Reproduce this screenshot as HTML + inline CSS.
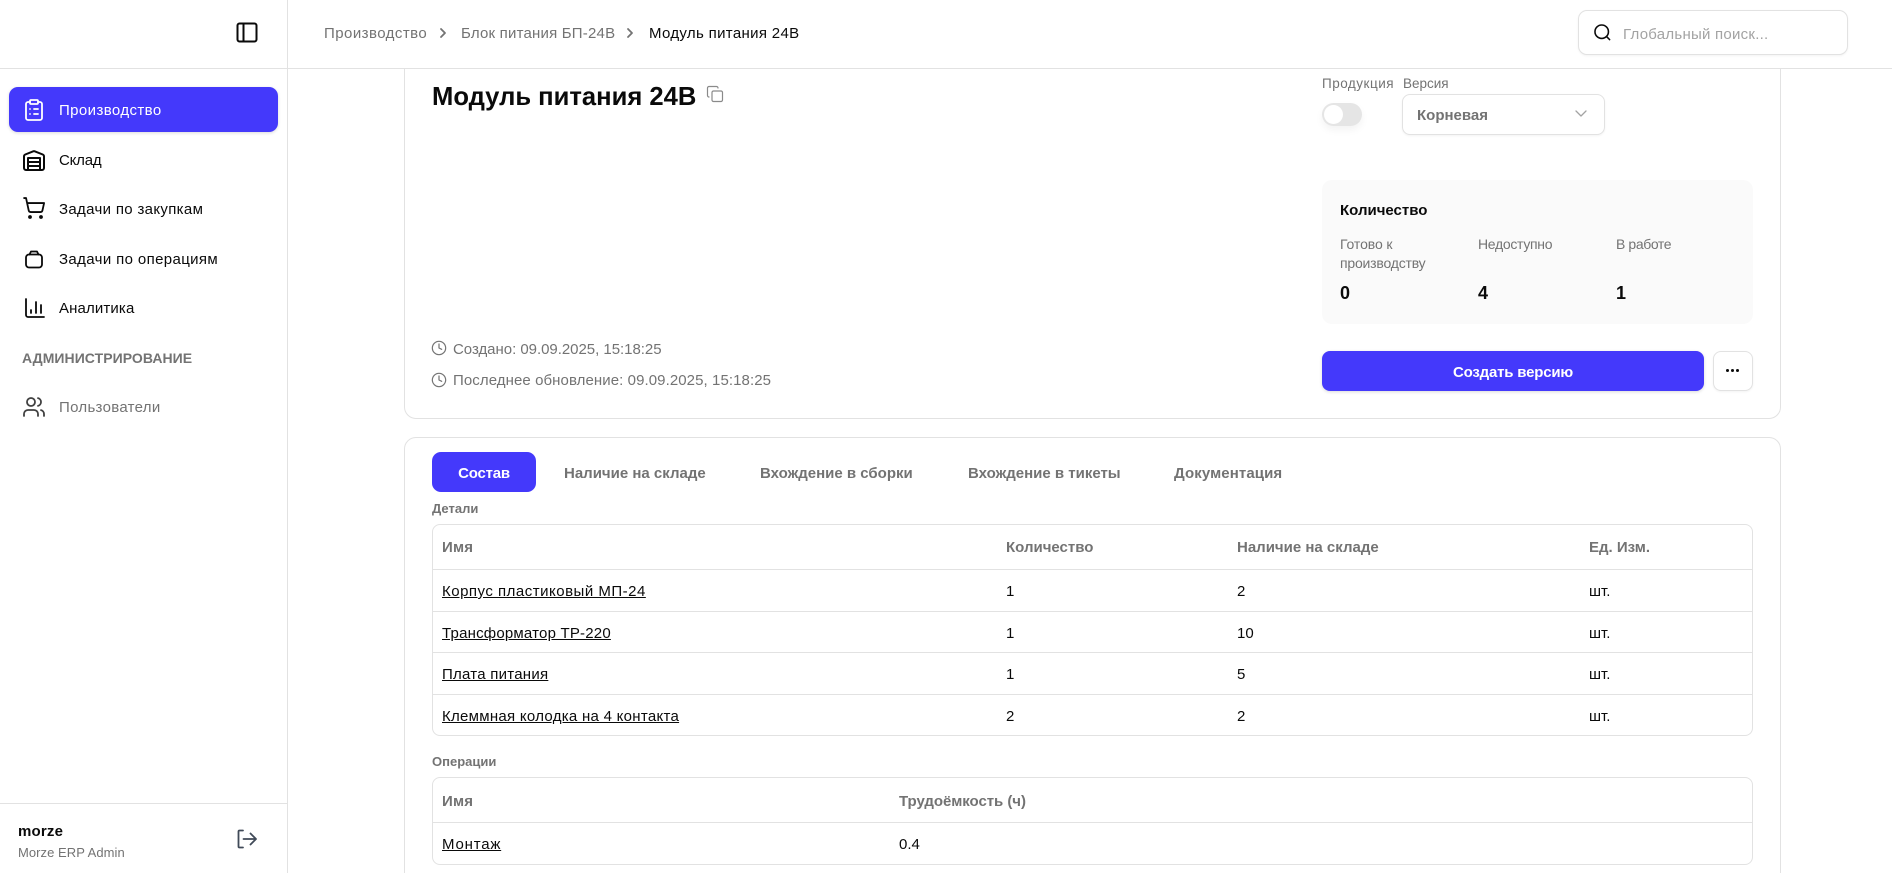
<!DOCTYPE html>
<html lang="ru"><head><meta charset="utf-8"><title>Модуль питания 24В</title>
<style>
html,body{margin:0;padding:0;width:1892px;height:873px;overflow:hidden;background:#fff}
body{position:relative;font-family:"Liberation Sans","Noto Sans CJK SC",sans-serif;font-size:15px;color:#0a0a0a}
.a{position:absolute}
.t{position:absolute;white-space:nowrap;line-height:20px;transform:translateY(-9px)}
.g{color:#737373}
.b{border:1px solid #e2e2e2;box-sizing:border-box;background:#fff}
.s{font-weight:700}
.l{background:#e2e2e2;height:1px}
a{color:#0a0a0a;text-decoration:underline}
svg{position:absolute;fill:none;stroke:currentColor;stroke-width:1.8;stroke-linecap:round;stroke-linejoin:round}
</style></head><body>

<!-- main cards -->
<div class="a b" style="left:404px;top:40px;width:1377px;height:379px;border-radius:12px"></div>
<div class="a b" style="left:404px;top:437px;width:1377px;height:500px;border-radius:12px"></div>

<!-- header -->
<div class="a" style="left:0;top:0;width:1892px;height:69px;background:#fff;border-bottom:1px solid #e2e2e2;box-sizing:border-box"></div>
<!-- sidebar -->
<div class="a" style="left:0;top:0;width:288px;height:873px;border-right:1px solid #e2e2e2;box-sizing:border-box"></div>
<div class="a" style="left:0;top:68px;width:288px;height:1px;background:#e2e2e2"></div>
<div class="a" style="left:0;top:803px;width:288px;height:1px;background:#e2e2e2"></div>

<svg style="left:235px;top:20px;color:#0a0a0a;stroke-width:2" width="24" height="24" viewBox="0 0 24 24"><rect x="2.5" y="3.5" width="19" height="18" rx="2"/><path d="M8.5 3.5v18"/></svg>

<div class="a" style="left:9px;top:87px;width:269px;height:45px;background:#4439fb;border-radius:9px;box-shadow:0 1px 3px rgba(0,0,0,.15)"></div>
<svg style="left:22px;top:98px;color:#fff" width="24" height="24" viewBox="0 0 24 24"><rect x="8" y="2" width="8" height="4" rx="1"/><path d="M16 4h2a2 2 0 0 1 2 2v14a2 2 0 0 1-2 2H6a2 2 0 0 1-2-2V6a2 2 0 0 1 2-2h2"/><path d="M12 11h4M12 16h4M8 11h.01M8 16h.01"/></svg>
<div class="t" style="left:59px;top:110px;color:#fff;letter-spacing:.4px">Производство</div>

<svg style="left:22px;top:148px;stroke-width:2" width="24" height="24" viewBox="0 0 24 24"><path d="M22 8.35V20a2 2 0 0 1-2 2H4a2 2 0 0 1-2-2V8.35A2 2 0 0 1 3.26 6.5l8-3.2a2 2 0 0 1 1.48 0l8 3.2A2 2 0 0 1 22 8.35Z"/><path d="M6 18h12M6 14h12"/><rect x="6" y="10" width="12" height="12"/></svg>
<div class="t" style="left:59px;top:160px;letter-spacing:-.2px">Склад</div>

<svg style="left:22px;top:196px" width="24" height="24" viewBox="0 0 24 24"><circle cx="8" cy="21" r="1"/><circle cx="19" cy="21" r="1"/><path d="M2.05 2.05h2l2.66 12.42a2 2 0 0 0 2 1.58h9.78a2 2 0 0 0 1.95-1.57l1.65-7.43H5.12"/></svg>
<div class="t" style="left:59px;top:209px;letter-spacing:.33px">Задачи по закупкам</div>

<svg style="left:22px;top:247px" width="24" height="24" viewBox="0 0 24 24"><rect x="4" y="7.5" width="16" height="13" rx="3"/><path d="M7.5 7.5 9 4.5h6l1.5 3"/></svg>
<div class="t" style="left:59px;top:259px;letter-spacing:.37px">Задачи по операциям</div>

<svg style="left:22px;top:296px" width="24" height="24" viewBox="0 0 24 24"><path d="M4 3v16a2 2 0 0 0 2 2h16"/><path d="M9 17v-3M14 17V6M19 17V9"/></svg>
<div class="t" style="left:59px;top:308px;letter-spacing:.13px">Аналитика</div>

<div class="t s g" style="left:22px;top:357px;font-size:14px;letter-spacing:.05px">АДМИНИСТРИРОВАНИЕ</div>

<svg style="left:22px;top:395px;color:#404040" width="24" height="24" viewBox="0 0 24 24"><path d="M16 21v-2a4 4 0 0 0-4-4H6a4 4 0 0 0-4 4v2"/><circle cx="9" cy="7" r="4"/><path d="M22 21v-2a4 4 0 0 0-3-3.87M16 3.13a4 4 0 0 1 0 7.75"/></svg>
<div class="t g" style="left:59px;top:407px;letter-spacing:.3px">Пользователи</div>

<div class="t s" style="left:18px;top:831px;letter-spacing:.2px">morze</div>
<div class="t g" style="left:18px;top:852px;font-size:13px;letter-spacing:.05px">Morze ERP Admin</div>
<svg style="left:235px;top:827px;color:#404a58" width="24" height="24" viewBox="0 0 24 24"><path d="M8 3.5H4.5a1 1 0 0 0-1 1v15a1 1 0 0 0 1 1H8"/><path d="m15.5 6.5 5.5 5.5-5.5 5.5M21 12H8.5"/></svg>

<!-- breadcrumbs -->
<div class="t g" style="left:324px;top:33px;letter-spacing:.45px">Производство</div>
<svg style="left:436px;top:26px;color:#737373" width="14" height="14" viewBox="0 0 14 14"><path d="m5 3 4 4-4 4"/></svg>
<div class="t g" style="left:461px;top:33px;letter-spacing:.2px">Блок питания БП-24В</div>
<svg style="left:623px;top:26px;color:#737373" width="14" height="14" viewBox="0 0 14 14"><path d="m5 3 4 4-4 4"/></svg>
<div class="t" style="left:649px;top:33px;letter-spacing:.33px">Модуль питания 24В</div>

<!-- search -->
<div class="a b" style="left:1578px;top:10px;width:270px;height:45px;border-radius:9px;box-shadow:0 1px 2px rgba(0,0,0,.05)"></div>
<svg style="left:1593px;top:23px;color:#0a0a0a;stroke-width:2" width="19" height="19" viewBox="0 0 24 24"><circle cx="11" cy="11" r="8.5"/><path d="m21 21-4-4"/></svg>
<div class="t" style="left:1623px;top:34px;color:#a3a3a3;letter-spacing:.25px">Глобальный поиск...</div>

<!-- title -->
<div class="t s" style="left:432px;top:97px;font-size:25.6px;line-height:32px;transform:translateY(-16px)">Модуль питания 24В</div>
<svg style="left:706px;top:85px;color:#8a8a8a;stroke-width:1.6" width="18" height="18" viewBox="0 0 24 24"><rect x="8" y="8" width="14" height="14" rx="2"/><path d="M4 16c-1.1 0-2-.9-2-2V4c0-1.1.9-2 2-2h10c1.1 0 2 .9 2 2"/></svg>

<div class="t g" style="left:1322px;top:83px;font-size:13.5px;letter-spacing:.5px">Продукция</div>
<div class="t g" style="left:1403px;top:83px;font-size:13.5px">Версия</div>
<div class="a" style="left:1322px;top:103px;width:40px;height:23px;border-radius:12px;background:#e5e5e5;box-shadow:0 4px 8px rgba(0,0,0,.05)"></div>
<div class="a" style="left:1324px;top:105px;width:19px;height:19px;border-radius:50%;background:#fff"></div>
<div class="a b" style="left:1402px;top:94px;width:203px;height:41px;border-radius:8px;box-shadow:0 1px 2px rgba(0,0,0,.05)"></div>
<div class="t s g" style="left:1417px;top:115px;">Корневая</div>
<svg style="left:1574px;top:107px;color:#a3a3a3;stroke-width:1.3" width="14" height="14" viewBox="0 0 14 14"><path d="m2 4 5 5 5-5"/></svg>

<div class="a" style="left:1322px;top:180px;width:431px;height:144px;border-radius:10px;background:#fafafa"></div>
<div class="t s" style="left:1340px;top:210px">Количество</div>
<div class="t g" style="left:1340px;top:243px;font-size:14px;letter-spacing:-.1px">Готово к</div>
<div class="t g" style="left:1340px;top:262px;font-size:14px;letter-spacing:-.2px">производству</div>
<div class="t g" style="left:1478px;top:243px;font-size:14px;letter-spacing:-.3px">Недоступно</div>
<div class="t g" style="left:1616px;top:243px;font-size:14px;letter-spacing:-.4px">В работе</div>
<div class="t s" style="left:1340px;top:292px;font-size:18px">0</div>
<div class="t s" style="left:1478px;top:292px;font-size:18px">4</div>
<div class="t s" style="left:1616px;top:292px;font-size:18px">1</div>

<div class="a" style="left:1322px;top:351px;width:382px;height:40px;background:#4439fb;border-radius:8px;box-shadow:0 1px 3px rgba(0,0,0,.15)"></div>
<div class="t s" style="left:1322px;width:382px;text-align:center;top:372px;color:#fff;letter-spacing:-.2px">Создать версию</div>
<div class="a b" style="left:1713px;top:351px;width:40px;height:40px;border-radius:8px;box-shadow:0 1px 2px rgba(0,0,0,.05)"></div>
<div class="a" style="left:1726px;top:369px;width:3px;height:3px;border-radius:50%;background:#0a0a0a;box-shadow:5px 0 #0a0a0a,10px 0 #0a0a0a"></div>

<svg style="left:431px;top:340px;color:#737373;stroke-width:1.8" width="16" height="16" viewBox="0 0 24 24"><circle cx="12" cy="12" r="10"/><path d="M12 6v6l4 2"/></svg>
<div class="t g" style="left:453px;top:349px;letter-spacing:-.03px">Создано: 09.09.2025, 15:18:25</div>
<svg style="left:431px;top:372px;color:#737373;stroke-width:1.8" width="16" height="16" viewBox="0 0 24 24"><circle cx="12" cy="12" r="10"/><path d="M12 6v6l4 2"/></svg>
<div class="t g" style="left:453px;top:380px;letter-spacing:.08px">Последнее обновление: 09.09.2025, 15:18:25</div>

<!-- tabs -->
<div class="a" style="left:432px;top:452px;width:104px;height:40px;background:#4439fb;border-radius:9px"></div>
<div class="t s" style="left:432px;width:104px;text-align:center;top:473px;color:#fff;letter-spacing:-.2px">Состав</div>
<div class="t s g" style="left:564px;top:473px">Наличие на складе</div>
<div class="t s g" style="left:760px;top:473px">Вхождение в сборки</div>
<div class="t s g" style="left:968px;top:473px">Вхождение в тикеты</div>
<div class="t s g" style="left:1174px;top:473px;letter-spacing:.1px">Документация</div>

<div class="t s g" style="left:432px;top:508px;font-size:13px">Детали</div>

<!-- table 1 -->
<div class="a b" style="left:432px;top:524px;width:1321px;height:212px;border-radius:8px"></div>
<div class="a l" style="left:433px;top:569px;width:1319px"></div>
<div class="a l" style="left:433px;top:611px;width:1319px"></div>
<div class="a l" style="left:433px;top:652px;width:1319px"></div>
<div class="a l" style="left:433px;top:694px;width:1319px"></div>

<div class="t s g" style="left:442px;top:547px;letter-spacing:.2px">Имя</div>
<div class="t s g" style="left:1006px;top:547px">Количество</div>
<div class="t s g" style="left:1237px;top:547px">Наличие на складе</div>
<div class="t s g" style="left:1589px;top:547px">Ед. Изм.</div>

<div class="t" style="left:442px;top:591px;letter-spacing:.5px"><a>Корпус пластиковый МП-24</a></div>
<div class="t" style="left:1006px;top:591px">1</div><div class="t" style="left:1237px;top:591px">2</div><div class="t" style="left:1589px;top:591px">шт.</div>
<div class="t" style="left:442px;top:633px;letter-spacing:.2px"><a>Трансформатор ТР-220</a></div>
<div class="t" style="left:1006px;top:633px">1</div><div class="t" style="left:1237px;top:633px">10</div><div class="t" style="left:1589px;top:633px">шт.</div>
<div class="t" style="left:442px;top:674px;letter-spacing:.25px"><a>Плата питания</a></div>
<div class="t" style="left:1006px;top:674px">1</div><div class="t" style="left:1237px;top:674px">5</div><div class="t" style="left:1589px;top:674px">шт.</div>
<div class="t" style="left:442px;top:716px;letter-spacing:.28px"><a>Клеммная колодка на 4 контакта</a></div>
<div class="t" style="left:1006px;top:716px">2</div><div class="t" style="left:1237px;top:716px">2</div><div class="t" style="left:1589px;top:716px">шт.</div>

<div class="t s g" style="left:432px;top:761px;font-size:13px">Операции</div>

<!-- table 2 -->
<div class="a b" style="left:432px;top:777px;width:1321px;height:88px;border-radius:8px"></div>
<div class="a l" style="left:433px;top:822px;width:1319px"></div>
<div class="t s g" style="left:442px;top:801px;letter-spacing:.2px">Имя</div>
<div class="t s g" style="left:899px;top:801px;letter-spacing:-.05px">Трудоёмкость (ч)</div>
<div class="t" style="left:442px;top:844px;letter-spacing:.8px"><a>Монтаж</a></div>
<div class="t" style="left:899px;top:844px">0.4</div>

</body></html>
